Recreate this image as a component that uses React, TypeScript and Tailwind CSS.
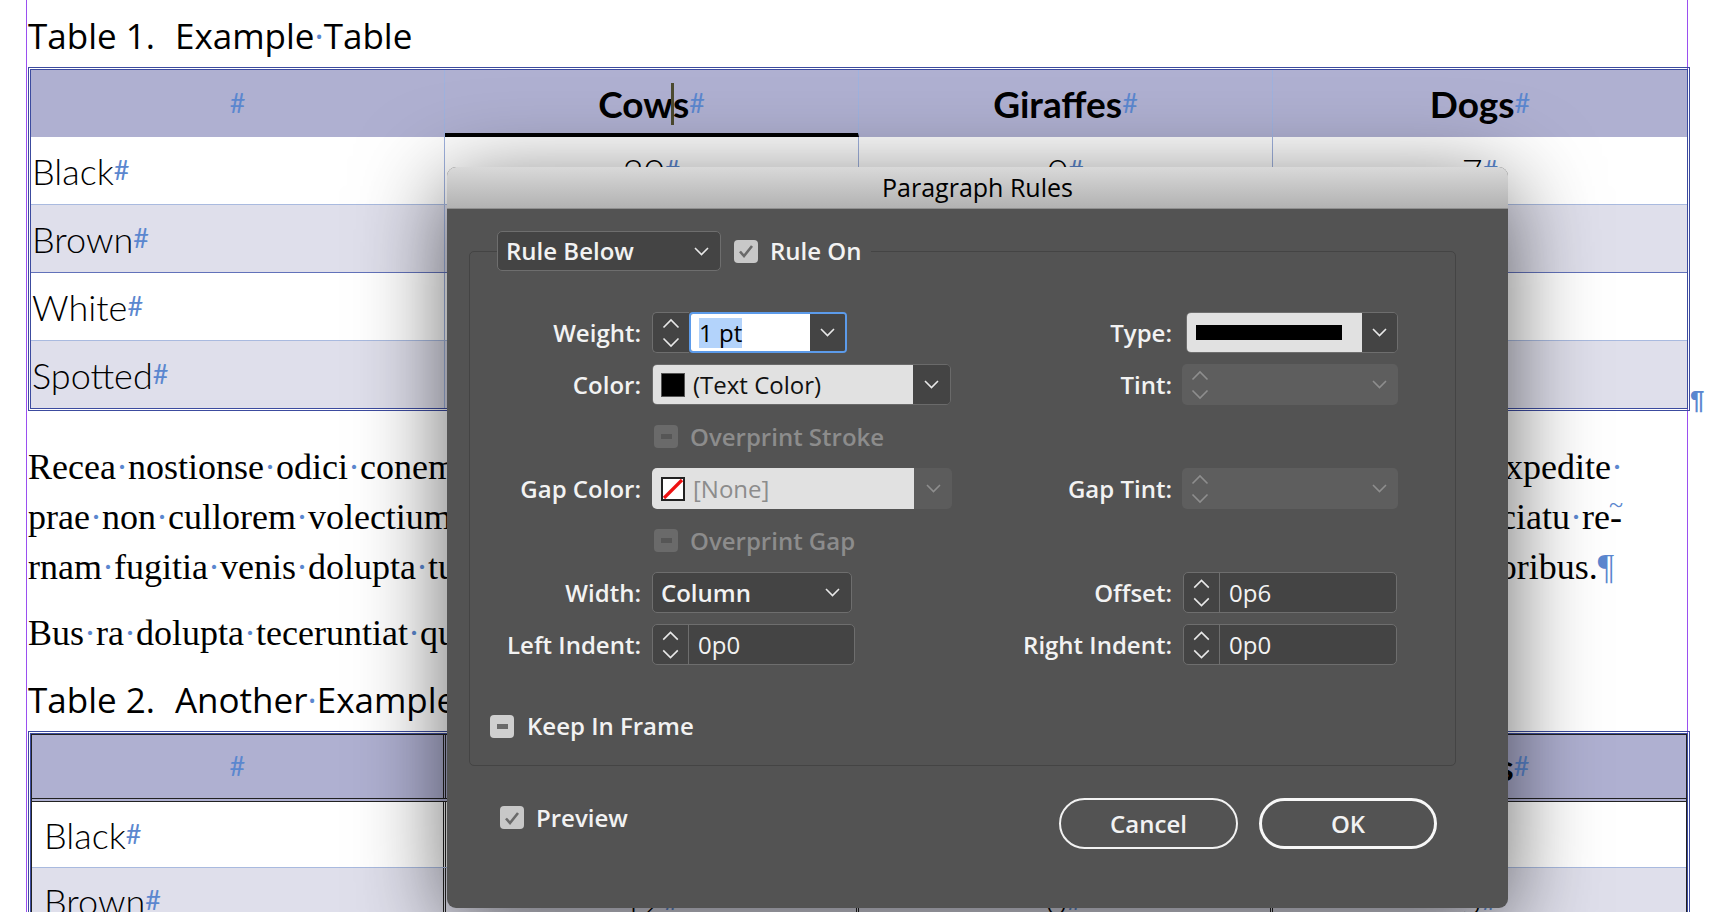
import React from "react";

const blue = "text-[#5b87cf]";

function Dot() {
  return <span className={blue}>·</span>;
}

function Words({ text }: { text: string }) {
  const parts = text.split(" ");
  return (
    <>
      {parts.map((w, i) => (
        <React.Fragment key={i}>
          {i > 0 && <Dot />}
          {w}
        </React.Fragment>
      ))}
    </>
  );
}

function Hash() {
  return <span className={`${blue} text-[27px] font-normal`}>#</span>;
}

const rows = [
  { name: "Black", vals: ["20", "0", "7"], bg: "bg-white", line: "border-[#a9badf]" },
  { name: "Brown", vals: ["12", "0", "5"], bg: "bg-[#dfdfeb]", line: "border-[#6272ba]" },
  { name: "White", vals: ["3", "0", "2"], bg: "bg-white", line: "border-[#a9badf]" },
  { name: "Spotted", vals: ["4", "33", "9"], bg: "bg-[#dfdfeb]", line: "" },
];

function Table1() {
  return (
    <div className="flex items-end">
      <div className="ml-[1px] w-[1662px] shrink-0 border-[3px] border-double border-[#3c4b9f] font-['Lato',sans-serif] text-black">
        <div className="grid h-[67px] grid-cols-4 bg-[#afb0d1] text-[37px] font-bold">
          <div className="flex items-center justify-center border-r border-[#9fb2de]">
            <Hash />
          </div>
          <div className="flex items-center justify-center border-r border-b-4 border-[#9fb2de] border-b-black pt-[4px]">
            <span className="flex items-center">
              Cow
              <span className="mx-[-1.5px] inline-block h-[42px] w-[3px] bg-[#4d4b30]" />
              s<Hash />
            </span>
          </div>
          <div className="flex items-center justify-center border-r border-[#9fb2de]">
            Giraffes<Hash />
          </div>
          <div className="flex items-center justify-center">
            Dogs<Hash />
          </div>
        </div>
        {rows.map((r, i) => (
          <div
            key={r.name}
            className={`grid grid-cols-4 text-[36px] font-light ${r.bg} ${
              i < rows.length - 1 ? `h-[68px] border-b ${r.line}` : "h-[67px]"
            }`}
          >
            <div className="flex items-center border-r border-[#9fb2de] pl-[1px]">
              {r.name}
              <Hash />
            </div>
            {r.vals.map((v, j) => (
              <div
                key={j}
                className={`flex items-center justify-center ${j < 2 ? "border-r border-[#9fb2de]" : ""}`}
              >
                {v}
                <Hash />
              </div>
            ))}
          </div>
        ))}
      </div>
      <span className="-mb-[2px] shrink-0 font-['Liberation_Sans',sans-serif] text-[26px] font-bold leading-none text-[#5b87cf]">
        ¶
      </span>
    </div>
  );
}

function Table2() {
  return (
    <div className="ml-[1px] w-[1662px] shrink-0 border-[3px] border-double border-[#3c4b9f] font-['Lato',sans-serif] text-black">
      <div className="border border-[#222]">
        <div className="grid h-[67px] grid-cols-4 border-b-[4px] border-double border-b-[#222] bg-[#afb0d1] text-[37px] font-bold">
          <div className="flex items-center justify-center border-r-[3px] border-double border-[#222]">
            <Hash />
          </div>
          <div className="flex items-center justify-center border-r-[3px] border-double border-[#222]">
            Cows<Hash />
          </div>
          <div className="flex items-center justify-center border-r-[3px] border-double border-[#222]">
            Giraffes<Hash />
          </div>
          <div className="flex items-center justify-center">
            Dogs<Hash />
          </div>
        </div>
        {rows.map((r) => (
          <div key={r.name} className={`grid h-[66px] grid-cols-4 border-b border-[#a9badf] text-[36px] font-light ${r.bg}`}>
            <div className="flex items-center border-r-[3px] border-double border-[#222] pl-[12px]">
              {r.name}
              <Hash />
            </div>
            {r.vals.map((v, j) => (
              <div
                key={j}
                className={`flex items-center justify-center ${j < 2 ? "border-r-[3px] border-double border-[#222]" : ""}`}
              >
                {v}
                <Hash />
              </div>
            ))}
          </div>
        ))}
      </div>
    </div>
  );
}

function Chevron({ dim = false }: { dim?: boolean }) {
  return (
    <svg width="15" height="9" viewBox="0 0 15 9" fill="none" className={dim ? "text-[#8e8e8e]" : "text-[#e8e8e8]"}>
      <path d="M1 1l6.5 6.5L14 1" stroke="currentColor" strokeWidth="1.6" />
    </svg>
  );
}

function SpinArrows({ dim = false }: { dim?: boolean }) {
  return (
    <svg width="36" height="39" viewBox="0 0 36 39" fill="none" className={dim ? "text-[#8e8e8e]" : "text-[#e8e8e8]"}>
      <path d="M10.5 14.5l7.5-7.5 7.5 7.5M10.5 25.5l7.5 7.5 7.5-7.5" stroke="currentColor" strokeWidth="1.6" />
    </svg>
  );
}

function CheckOn() {
  return (
    <span className="flex h-[23px] w-[24px] shrink-0 items-center justify-center rounded-[4px] bg-[#c8c8c8]">
      <svg width="16" height="14" viewBox="0 0 16 14" fill="none">
        <path d="M2 7.5l4 4.5L14 2" stroke="#6a6a6a" strokeWidth="2.6" />
      </svg>
    </span>
  );
}

function CheckMixed({ disabled = false }: { disabled?: boolean }) {
  return (
    <span
      className={`flex h-[23px] w-[24px] shrink-0 items-center justify-center rounded-[4px] ${
        disabled ? "bg-[#6a6a6a]" : "bg-[#cfcfcf]"
      }`}
    >
      <span className={`h-[5px] w-[11px] ${disabled ? "bg-[#565656]" : "bg-[#6a6a6a]"}`} />
    </span>
  );
}

function Label({ children }: { children: React.ReactNode }) {
  return <div className="flex h-[41px] items-center justify-end font-semibold">{children}</div>;
}

function Spinner({ value, width }: { value: string; width: string }) {
  return (
    <div className={`flex h-[41px] ${width} rounded-[5px] border border-[#6e6e6e] bg-[#444]`}>
      <div className="flex w-[36px] items-center justify-center border-r border-[#6e6e6e]">
        <SpinArrows />
      </div>
      <div className="flex items-center pl-[9px]">{value}</div>
    </div>
  );
}

function TintField() {
  return (
    <div className="flex h-[41px] w-[216px] -ml-[1px] items-center justify-between rounded-[5px] bg-[#5e5e5e] pr-[11px]">
      <SpinArrows dim />
      <Chevron dim />
    </div>
  );
}

function Dropdown({ label, width, height = "h-[40px]" }: { label: string; width: string; height?: string }) {
  return (
    <div
      className={`flex ${height} ${width} items-center justify-between rounded-[5px] border border-[#6e6e6e] bg-[#444] pl-[8px] pr-[11px] font-semibold`}
    >
      {label}
      <Chevron />
    </div>
  );
}

function Dialog() {
  return (
    <div className="absolute left-[447px] top-[167px] flex h-[741px] w-[1061px] flex-col overflow-hidden rounded-[9px] bg-[#535353] font-['Open_Sans',sans-serif] text-[24px] text-[#f2f2f2] shadow-[0_18px_90px_rgba(0,0,0,0.6)]">
      <div className="flex h-[42px] shrink-0 items-center justify-center border-b border-[#8f8f8f] bg-gradient-to-b from-[#d9d9d9] to-[#b2b2b2] text-[25px] text-black">
        Paragraph Rules
      </div>
      <div className="pl-[22px] pr-[52px] pt-[22px]">
        <fieldset className="h-[535px] rounded-[5px] border border-[#444]">
          <legend className="ml-[27px] flex items-center pr-[10px]">
            <Dropdown label="Rule Below" width="w-[224px]" />
            <span className="ml-[13px]">
              <CheckOn />
            </span>
            <span className="ml-[12px] font-semibold">Rule On</span>
          </legend>
          <div className="grid grid-cols-[171px_300px_209px_215px] gap-x-[11px] gap-y-[11px] pt-[41px]">
            <Label>Weight:</Label>
            <div className="flex h-[41px] w-[195px]">
              <div className="flex w-[37px] items-center justify-center rounded-l-[5px] border border-r-0 border-[#6e6e6e] bg-[#444]">
                <SpinArrows />
              </div>
              <div className="flex flex-1 overflow-hidden rounded-[4px] border-2 border-[#5c9bea]">
                <div className="flex flex-1 items-center bg-white pl-[8px] text-black">
                  <span className="bg-[#b3d3fb] leading-[30px]">1 pt</span>
                </div>
                <div className="flex w-[35px] items-center justify-center bg-[#444]">
                  <Chevron />
                </div>
              </div>
            </div>
            <Label>Type:</Label>
            <div className="ml-[3px] flex h-[41px] w-[212px] overflow-hidden rounded-[5px] border border-[#6e6e6e]">
              <div className="flex flex-1 items-center bg-[#e1e1e1] pl-[9px]">
                <span className="h-[15px] w-[146px] bg-black" />
              </div>
              <div className="flex w-[35px] items-center justify-center bg-[#444]">
                <Chevron />
              </div>
            </div>

            <Label>Color:</Label>
            <div className="flex h-[41px] w-[299px] overflow-hidden rounded-[5px] border border-[#6a6a6a]">
              <div className="flex flex-1 items-center gap-[8px] bg-[#e1e1e1] pl-[8px] text-[#111]">
                <span className="h-[24px] w-[24px] border border-[#555] bg-black" />
                (Text Color)
              </div>
              <div className="flex w-[37px] items-center justify-center bg-[#444]">
                <Chevron />
              </div>
            </div>
            <Label>Tint:</Label>
            <TintField />

            <div />
            <div className="flex h-[41px] items-center gap-[12px] pl-[2px] font-semibold text-[#8c8c8c]">
              <CheckMixed disabled />
              Overprint Stroke
            </div>
            <div />
            <div />

            <Label>Gap Color:</Label>
            <div className="flex h-[41px] w-[300px] overflow-hidden rounded-[5px]">
              <div className="flex flex-1 items-center gap-[8px] bg-[#e1e1e1] pl-[9px] text-[#8c8c8c]">
                <svg width="24" height="24" viewBox="0 0 24 24">
                  <rect x="1" y="1" width="22" height="22" fill="#fff" stroke="#222" strokeWidth="2" />
                  <path d="M3 21L21 3" stroke="#ee1111" strokeWidth="3.2" />
                </svg>
                [None]
              </div>
              <div className="flex w-[38px] items-center justify-center bg-[#5c5c5c]">
                <Chevron dim />
              </div>
            </div>
            <Label>Gap Tint:</Label>
            <TintField />

            <div />
            <div className="flex h-[41px] items-center gap-[12px] pl-[2px] font-semibold text-[#8c8c8c]">
              <CheckMixed disabled />
              Overprint Gap
            </div>
            <div />
            <div />

            <Label>Width:</Label>
            <Dropdown label="Column" width="w-[200px]" height="h-[41px]" />
            <Label>Offset:</Label>
            <Spinner value="0p6" width="w-[214px]" />

            <Label>Left Indent:</Label>
            <Spinner value="0p0" width="w-[203px]" />
            <Label>Right Indent:</Label>
            <Spinner value="0p0" width="w-[214px]" />
          </div>
          <div className="mt-[49px] flex h-[24px] items-center gap-[13px] pl-[20px] font-semibold">
            <CheckMixed />
            Keep In Frame
          </div>
        </fieldset>
      </div>
      <div className="mt-[32px] flex items-center justify-between pl-[53px] pr-[71px]">
        <div className="-mt-[12px] flex items-center gap-[12px] font-semibold">
          <CheckOn />
          Preview
        </div>
        <div className="flex gap-[21px] font-semibold">
          <button className="flex h-[51px] w-[179px] items-center justify-center rounded-full border-2 border-[#f2f2f2]">
            Cancel
          </button>
          <button className="flex h-[51px] w-[178px] items-center justify-center rounded-full border-[3px] border-[#f7f7f7]">
            OK
          </button>
        </div>
      </div>
    </div>
  );
}

export default function App() {
  return (
    <div className="relative h-[912px] w-full overflow-hidden bg-white">
      <div className="ml-[26px] h-full w-[1662px] border-x border-[#9a4ff0]">
        <div className="flex h-[67px] items-center pl-[1px] pt-[5px] font-['Open_Sans',sans-serif] text-[35px] text-black">
          <p>
            Table 1.<span className="inline-block w-[20px]" />
            Example<Dot />Table
          </p>
        </div>
        <Table1 />
        <div className="mt-[31px] w-[1596px] pl-[1px] font-['Liberation_Serif',serif] text-[36px] leading-[50px] text-black">
          <div className="flex justify-between">
            <span>
              <Words text="Recea nostionse odici conem quibus dolore nobis" />
            </span>
            <span>
              <Words text="expedite " />
            </span>
          </div>
          <div className="flex justify-between">
            <span>
              <Words text="prae non cullorem volectium sequam fugiam quo" />
            </span>
            <span>
              <Words text="ciatu re-" />
              <span className={`${blue} -ml-[13px] align-top text-[26px] leading-none`}>~</span>
            </span>
          </div>
          <div className="flex justify-between pr-[9px]">
            <span>
              <Words text="rnam fugitia venis dolupta tur aut eos volupta" />
            </span>
            <span>
              oribus.<span className={blue}>¶</span>
            </span>
          </div>
          <div className="mt-[16px]">
            <Words text="Bus ra dolupta teceruntiat qui odi optatem sequi" />
          </div>
        </div>
        <div className="flex h-[73px] items-center pl-[1px] pt-[11px] font-['Open_Sans',sans-serif] text-[35px] text-black">
          <p>
            Table 2.<span className="inline-block w-[20px]" />
            Another<Dot />Example<Dot />Table
          </p>
        </div>
        <Table2 />
      </div>
      <Dialog />
    </div>
  );
}
